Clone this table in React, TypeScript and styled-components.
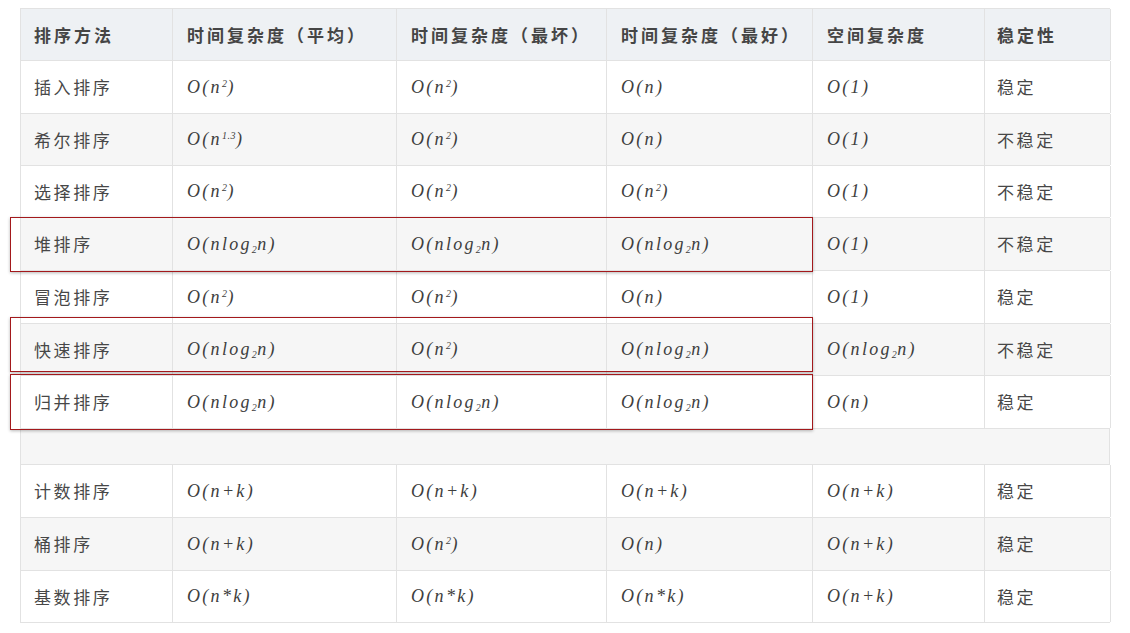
import React from "react";
import styled, { createGlobalStyle } from "styled-components";

const Global = createGlobalStyle`
  html, body { margin: 0; padding: 0; background: #ffffff; }
  body { font-family: "Noto Sans CJK SC", "Noto Sans", sans-serif; }
`;

const Page = styled.div`
  width: 1130px;
  height: 633px;
  padding: 8px 20px 0 20px;
  box-sizing: border-box;
  overflow: hidden;
`;

const TableWrap = styled.div`
  position: relative;
  width: 1090px;
`;

const COLS = "152px 224px 210px 206px 172px 126px";

const Row = styled.div<{ $bg: string; $h: number }>`
  display: grid;
  grid-template-columns: ${COLS};
  height: ${(p) => p.$h}px;
  background: ${(p) => p.$bg};
  border-left: 1px solid #e2e2e2;
  border-bottom: 1px solid #e2e2e2;
  box-sizing: border-box;
`;

const HeaderRow = styled(Row)`
  border-top: 1px solid #e2e2e2;
`;

const Cell = styled.div<{ $pad?: number }>`
  display: flex;
  align-items: center;
  padding-left: ${(p) => p.$pad ?? 14}px;
  border-right: 1px solid #e2e2e2;
  box-sizing: border-box;
  min-width: 0;
  white-space: nowrap;
`;

const EmptyRow = styled.div`
  height: 36px;
  background: #f6f6f6;
  border-left: 1px solid #e2e2e2;
  border-right: 1px solid #e2e2e2;
  border-bottom: 1px solid #e2e2e2;
  box-sizing: border-box;
`;

const HeadText = styled.span`
  font-family: "Noto Sans CJK SC", sans-serif;
  font-weight: 700;
  font-size: 17px;
  letter-spacing: 3px;
  color: #454545;
  margin-top: -1px;
`;

const CnText = styled.span`
  font-family: "Noto Sans CJK SC", sans-serif;
  font-size: 17px;
  letter-spacing: 2.6px;
  color: #474747;
  margin-top: -1px;
`;

const Math = styled.span`
  font-family: "Liberation Serif", "Times New Roman", serif;
  font-style: italic;
  font-size: 18px;
  letter-spacing: 2.3px;
  color: #3e3e3e;
  sup, sub {
    font-size: 10px;
    letter-spacing: 0.5px;
    line-height: 0;
  }
  sup { vertical-align: 6px; }
  sub { vertical-align: -3px; }
`;

const RedBox = styled.div<{ $top: number; $h: number }>`
  position: absolute;
  left: -10px;
  width: 803px;
  top: ${(p) => p.$top}px;
  height: ${(p) => p.$h}px;
  border: 1.5px solid #a3191c;
  box-sizing: border-box;
  box-shadow: 0 1px 3px rgba(0, 0, 0, 0.28);
  pointer-events: none;
`;

const N2 = () => (
  <Math>
    O(n<sup>2</sup>)
  </Math>
);
const N = () => <Math>O(n)</Math>;
const One = () => <Math>O(1)</Math>;
const NLog = () => (
  <Math>
    O(nlog<sub>2</sub>n)
  </Math>
);
const N13 = () => (
  <Math>
    O(n<sup>1.3</sup>)
  </Math>
);
const NK = () => <Math>O(n+k)</Math>;
const NStarK = () => <Math>O(n*k)</Math>;

type RowData = {
  name: string;
  avg: React.ReactNode;
  worst: React.ReactNode;
  best: React.ReactNode;
  space: React.ReactNode;
  stable: string;
};

const top: RowData[] = [
  { name: "插入排序", avg: <N2 />, worst: <N2 />, best: <N />, space: <One />, stable: "稳定" },
  { name: "希尔排序", avg: <N13 />, worst: <N2 />, best: <N />, space: <One />, stable: "不稳定" },
  { name: "选择排序", avg: <N2 />, worst: <N2 />, best: <N2 />, space: <One />, stable: "不稳定" },
  { name: "堆排序", avg: <NLog />, worst: <NLog />, best: <NLog />, space: <One />, stable: "不稳定" },
  { name: "冒泡排序", avg: <N2 />, worst: <N2 />, best: <N />, space: <One />, stable: "稳定" },
  { name: "快速排序", avg: <NLog />, worst: <N2 />, best: <NLog />, space: <NLog />, stable: "不稳定" },
  { name: "归并排序", avg: <NLog />, worst: <NLog />, best: <NLog />, space: <N />, stable: "稳定" },
];

const bottom: RowData[] = [
  { name: "计数排序", avg: <NK />, worst: <NK />, best: <NK />, space: <NK />, stable: "稳定" },
  { name: "桶排序", avg: <NK />, worst: <N2 />, best: <N />, space: <NK />, stable: "稳定" },
  { name: "基数排序", avg: <NStarK />, worst: <NStarK />, best: <NStarK />, space: <NK />, stable: "稳定" },
];

const topHeights = [53, 52, 52, 53, 53, 52, 53];
const bottomHeights = [53, 53, 52];

const DataRow = ({ d, bg, h }: { d: RowData; bg: string; h: number }) => (
  <Row $bg={bg} $h={h}>
    <Cell $pad={13}>
      <CnText>{d.name}</CnText>
    </Cell>
    <Cell>{d.avg}</Cell>
    <Cell>{d.worst}</Cell>
    <Cell>{d.best}</Cell>
    <Cell>{d.space}</Cell>
    <Cell $pad={12}>
      <CnText>{d.stable}</CnText>
    </Cell>
  </Row>
);

const headers = [
  "排序方法",
  "时间复杂度（平均）",
  "时间复杂度（最坏）",
  "时间复杂度（最好）",
  "空间复杂度",
  "稳定性",
];

export default function App() {
  return (
    <>
      <Global />
      <Page>
        <TableWrap>
          <HeaderRow $bg="#eef1f4" $h={53}>
            {headers.map((h, i) => (
              <Cell key={h} $pad={i === 0 ? 13 : i === 5 ? 12 : 14}>
                <HeadText>{h}</HeadText>
              </Cell>
            ))}
          </HeaderRow>
          {top.map((d, i) => (
            <DataRow key={d.name} d={d} bg={i % 2 === 1 ? "#f6f6f6" : "#ffffff"} h={topHeights[i]} />
          ))}
          <EmptyRow />
          {bottom.map((d, i) => (
            <DataRow key={d.name} d={d} bg={i % 2 === 1 ? "#f6f6f6" : "#ffffff"} h={bottomHeights[i]} />
          ))}
          <RedBox $top={209} $h={55} />
          <RedBox $top={309} $h={55} />
          <RedBox $top={366} $h={56} />
        </TableWrap>
      </Page>
    </>
  );
}
